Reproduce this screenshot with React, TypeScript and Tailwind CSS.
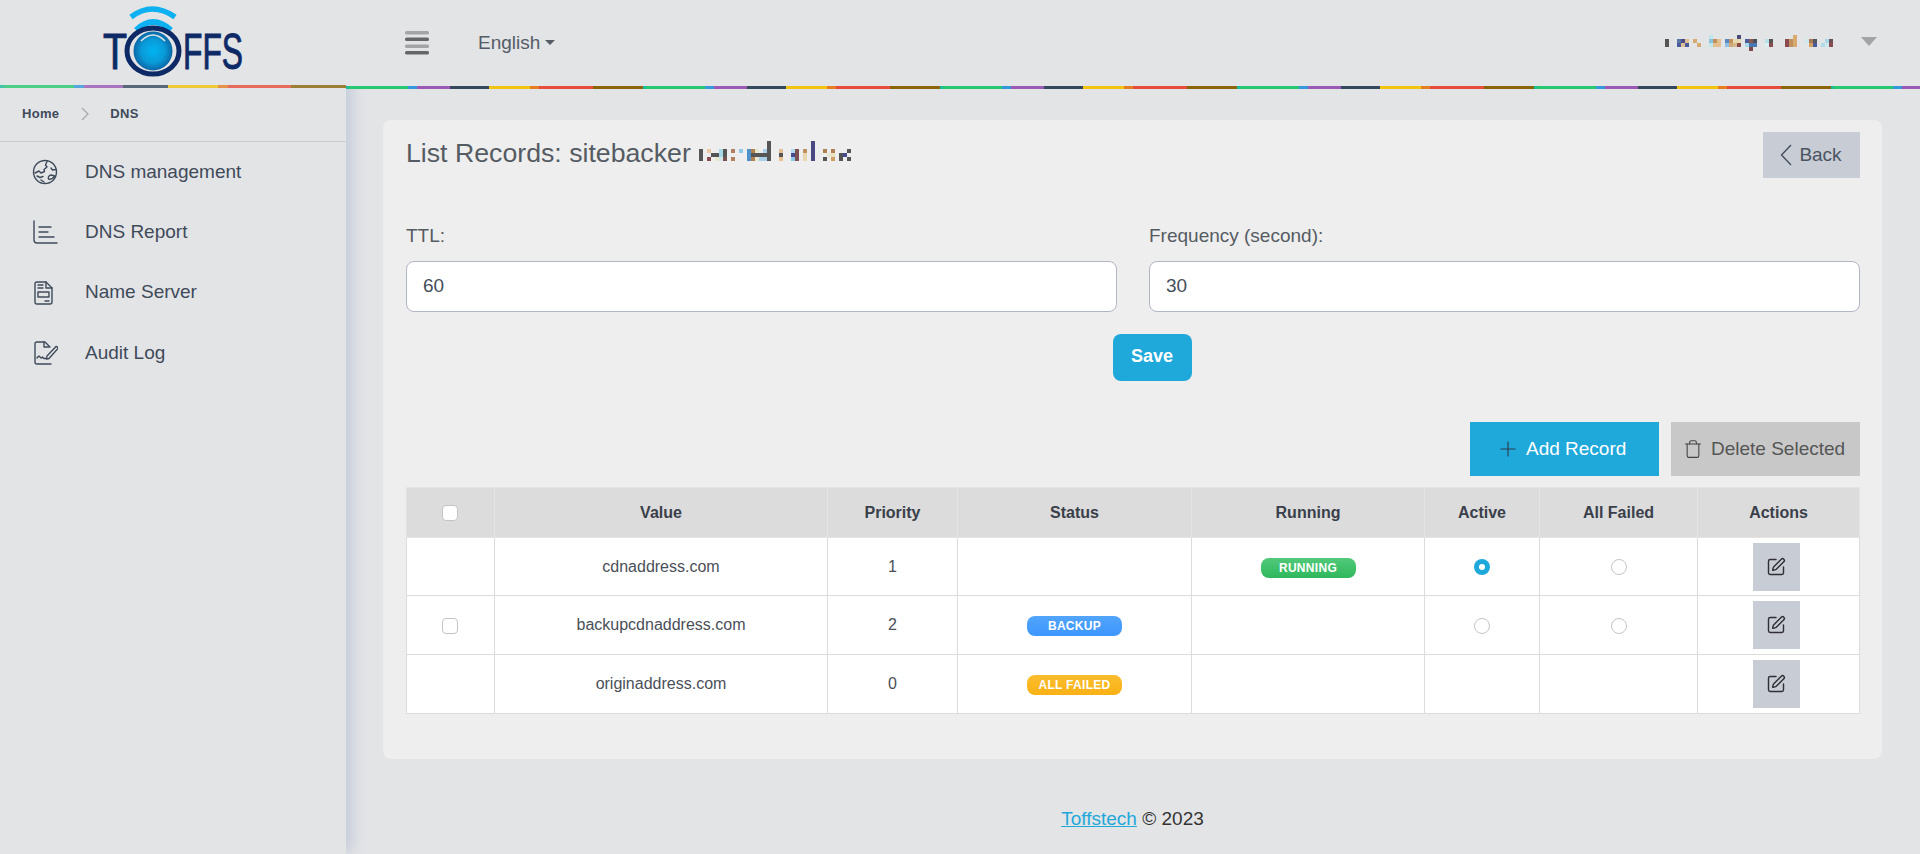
import { SquarePen, Plus, Trash } from "lucide-react";

type Cell = [number, number, string];

const nameCells: Cell[] = [
  [0,1,"#555"],[0,2,"#555"],
  [3,1,"#5b78a8"],[3,2,"#4a5a9a"],[4,1,"#4a4a8a"],[4,2,"#e0c090"],[5,1,"#e0c090"],[5,2,"#4a5a9a"],
  [7,1,"#d8aa70"],[8,2,"#d8aa70"],
  [11,0,"#bfe6ea"],[11,1,"#8cc4e0"],[11,2,"#bfe6ea"],[12,1,"#c09060"],[12,2,"#e4c090"],[13,1,"#e4c090"],[13,2,"#e4c090"],
  [15,1,"#5b8ac0"],[15,2,"#90c0e8"],[16,1,"#c09060"],[16,2,"#d0a878"],[17,1,"#e8d8b0"],[17,2,"#d8b888"],[18,0,"#4a4a7a"],[18,1,"#e8d8b0"],[18,2,"#8a4a4a"],
  [20,1,"#4a5a9a"],[20,2,"#a8d8e8"],[21,1,"#8a5a50"],[21,2,"#4a78b0"],[21,3,"#7a4a4a"],[22,1,"#4a5060"],[22,2,"#4a78b0"],
  [25,1,"#b8e0e8"],[25,2,"#d8eef0"],[26,1,"#555"],[26,2,"#8a4a50"],
  [30,1,"#8a4a50"],[30,2,"#8a4a50"],[31,1,"#c09060"],[31,2,"#c09060"],[32,0,"#d8aa70"],[32,1,"#d8aa70"],[32,2,"#d8aa70"],
  [35,1,"#cde8ec"],[36,1,"#a87858"],[36,2,"#d0a060"],[37,1,"#555860"],[37,2,"#4a5a9a"],
  [39,2,"#b0dce8"],[40,1,"#a8d8e8"],[40,2,"#cde8ec"],[41,1,"#6a5058"],[41,2,"#8a4a50"],
];

const titleCells: Cell[] = [
  [0,2,"#555"],[0,3,"#555"],[0,4,"#555"],
  [2,2,"#e8c8a0"],[2,4,"#8a4a50"],[3,3,"#555"],[4,3,"#555"],[4,4,"#e8e8d0"],[5,2,"#a8d8e8"],[5,3,"#a8d8e8"],[5,4,"#d0e8ec"],
  [6,2,"#555"],[6,3,"#555"],[6,4,"#7a5050"],[8,2,"#b08060"],[8,4,"#b08060"],[10,2,"#90c8e8"],
  [12,2,"#5090c8"],[12,3,"#5090c8"],[12,4,"#5090c8"],[13,2,"#b08050"],[13,3,"#555"],[13,4,"#b08050"],[14,2,"#e8e8d0"],[14,3,"#555"],[14,4,"#e8e8d0"],
  [15,3,"#555"],[15,4,"#a8d0e8"],[16,2,"#a8d0e8"],[16,3,"#555"],[16,4,"#a8d0e8"],
  [17,0,"#555"],[17,1,"#555"],[17,2,"#555"],[17,3,"#555"],[17,4,"#555"],
  [20,2,"#e0c090"],[20,3,"#555"],[20,4,"#e8c090"],
  [23,2,"#b0d8f0"],[23,3,"#4a4a90"],[23,4,"#90c8e8"],[24,2,"#7a5050"],[24,3,"#7a5050"],[24,4,"#7a5050"],
  [26,2,"#c09060"],[26,3,"#e8d8b0"],[26,4,"#e8d8b0"],
  [28,0,"#4a4a80"],[28,1,"#4a4a80"],[28,2,"#4a4a80"],[28,3,"#4a4a80"],[28,4,"#4a4a80"],
  [31,2,"#b08050"],[31,4,"#555"],[32,3,"#e8e8d0"],[33,2,"#b08050"],[33,3,"#e8e0c0"],[33,4,"#d0a060"],
  [35,3,"#555"],[35,4,"#555"],[36,3,"#4a4a90"],[37,2,"#555"],[37,4,"#555"],
];

function Mosaic({ cells, cols, rows, className }: { cells: Cell[]; cols: number; rows: number; className?: string }) {
  return (
    <svg width={cols * 4} height={rows * 4} viewBox={`0 0 ${cols * 4} ${rows * 4}`} className={className} shapeRendering="crispEdges">
      {cells.map(([c, r, f], i) => (
        <rect key={i} x={c * 4} y={r * 4} width={4} height={4} fill={f} />
      ))}
    </svg>
  );
}

function Logo() {
  return (
    <svg width="170" height="85" viewBox="90 0 170 85" className="block">
      <defs>
        <radialGradient id="ball" cx="50%" cy="50%" r="55%">
          <stop offset="0%" stopColor="#00b4f0" />
          <stop offset="55%" stopColor="#0a9ad8" />
          <stop offset="100%" stopColor="#0a5a9a" />
        </radialGradient>
      </defs>
      <text transform="translate(103 69) scale(0.787 1)" fontFamily="'Liberation Sans', sans-serif" fontSize="50" fill="#0e2a66" stroke="#0e2a66" strokeWidth="1">T</text>
      <text transform="translate(183 69) scale(0.635 1)" fontFamily="'Liberation Sans', sans-serif" fontSize="50" fill="#0e2a66" stroke="#0e2a66" strokeWidth="1">FFS</text>
      <path d="M131 17 Q152 1 175 17" fill="none" stroke="#0db1f2" strokeWidth="5.5" />
      <path d="M136 30 Q153 14 171 30" fill="none" stroke="#0db1f2" strokeWidth="5.5" />
      <ellipse cx="153" cy="51" rx="26" ry="23" fill="#e3e4e6" stroke="#0e2a66" strokeWidth="5" />
      <circle cx="153" cy="51" r="19.5" fill="url(#ball)" />
      <path d="M141 41 Q153 29 165 41" fill="none" stroke="#e3e4e6" strokeWidth="1.6" />
    </svg>
  );
}

function Hamburger() {
  return (
    <svg width="24" height="24" viewBox="0 0 24 24" className="block">
      <rect x="0" y="0" width="24" height="3.5" rx="1.5" fill="#a4a4a4" />
      <rect x="0" y="6.5" width="24" height="3.5" rx="1.5" fill="#666" />
      <rect x="0" y="13.5" width="24" height="3.5" rx="1.5" fill="#a4a4a4" />
      <rect x="0" y="20" width="24" height="3.5" rx="1.5" fill="#666" />
    </svg>
  );
}

const iconProps = { width: 26, height: 26, viewBox: "0 0 26 26", fill: "none", stroke: "#3f4a5a", strokeWidth: 1.4, strokeLinecap: "round" as const, strokeLinejoin: "round" as const };

function GlobeIcon() {
  return (
    <svg {...iconProps}>
      <circle cx="13" cy="13" r="11.5" />
      <path d="M15 2.5 L13.5 6 L15 8 L12 10.5 L12.5 12.5 L9 14 L7 12 L3 14" />
      <path d="M24 10.5 L20.5 11 L19 9 M23 17 L19 16 Q15.5 17 16.5 20 Q20 21 23 17 Z" />
      <path d="M5 17 L8 18.5 L11 17.5 M9 21 L12 23" />
    </svg>
  );
}
function ChartIcon() {
  return (
    <svg {...iconProps}>
      <path d="M2 2 V21 Q2 24 5 24 H25" />
      <path d="M7 8 H19 M7 13 H16 M7 18 H22" />
    </svg>
  );
}
function DocIcon() {
  return (
    <svg {...iconProps}>
      <path d="M5 2 H14 L20 8 V22 Q20 24 18 24 H5 Q3 24 3 22 V4 Q3 2 5 2 Z" />
      <path d="M14 2 V8 H20" />
      <path d="M6 5 H11 M6 8 H11" />
      <rect x="6" y="12" width="11" height="5" />
      <path d="M13 21 H17" />
    </svg>
  );
}
function AuditIcon() {
  return (
    <svg {...iconProps}>
      <path d="M19 24 H5 Q3 24 3 22 V4 Q3 2 5 2 H13 L18 7" />
      <path d="M12 2 V7 H17" />
      <path d="M5 18 Q7 15 8 17 T10.5 17 L12 18.5 H14" />
      <path d="M15 16 L24 6.5 Q26 6.5 26 8.5 L17 18.5 L14.5 19 Z" />
    </svg>
  );
}

const stripTop =
  "bg-[repeating-linear-gradient(90deg,#1abc9c_0,#1abc9c_3px,#27c970_3px,#27c970_62px,#3498db_62px,#3498db_71px,#9b59b6_71px,#9b59b6_104px,#34495e_104px,#34495e_143px,#f1c40f_143px,#f1c40f_184px,#e67e22_184px,#e67e22_193px,#e74c3c_193px,#e74c3c_247px,#8b6508_247px,#8b6508_297px)]";
const stripSide =
  "bg-[linear-gradient(90deg,#1abc9c_0,#1abc9c_4px,#27c970_4px,#27c970_74px,#3498db_74px,#3498db_84px,#9b59b6_84px,#9b59b6_123px,#34495e_123px,#34495e_168px,#f1c40f_168px,#f1c40f_218px,#e67e22_218px,#e67e22_228px,#e74c3c_228px,#e74c3c_291px,#8b6508_291px,#8b6508_346px)]";

const menu = [
  { label: "DNS management", icon: <GlobeIcon /> },
  { label: "DNS Report", icon: <ChartIcon /> },
  { label: "Name Server", icon: <DocIcon /> },
  { label: "Audit Log", icon: <AuditIcon /> },
];

function Radio({ checked }: { checked?: boolean }) {
  return checked ? (
    <span className="inline-flex w-4 h-4 rounded-full bg-[#1fa8da] items-center justify-center align-middle">
      <span className="w-1.5 h-1.5 rounded-full bg-white" />
    </span>
  ) : (
    <span className="inline-block w-4 h-4 rounded-full border border-[#c4c4c4] bg-white align-middle" />
  );
}

function Check() {
  return <span className="inline-block w-4 h-4 mr-[2px] rounded-[4px] border border-[#c4c4c4] bg-white align-middle" />;
}

function Badge({ text, className }: { text: string; className: string }) {
  return (
    <span className={`inline-flex w-[95px] h-5 rounded-lg items-center justify-center text-white text-[12px] font-bold tracking-[0.3px] ${className}`}>
      {text}
    </span>
  );
}

function EditBtn() {
  return (
    <span className="inline-flex w-[47px] h-12 mr-[5px] bg-[#c8ccd4] items-center justify-center align-middle">
      <SquarePen size={20} strokeWidth={1.7} color="#2f2f35" />
    </span>
  );
}

const th = "border border-[#e4e4e4] font-bold text-center p-0";
const td = "border border-[#dcdcdc] text-center p-0";

export default function App() {
  return (
    <div className="flex h-[854px] w-[1920px] overflow-hidden bg-[#e3e4e6] font-['Liberation_Sans',Arial,sans-serif] text-[#3f4a5a]">
      <aside className="relative z-10 w-[346px] shrink-0 flex flex-col bg-[#e3e4e6] shadow-[8px_0_14px_-2px_#c3cad9]">
        <div className="h-[85px] flex pl-[90px]">
          <Logo />
        </div>
        <div className={`h-[3px] opacity-80 ${stripSide}`} />
        <div className="h-[54px] flex items-center pl-[22px] pb-[2px] border-b border-[#ccced2] text-[13px] font-bold tracking-[0.3px]">
          <span>Home</span>
          <svg width="10" height="14" viewBox="0 0 10 14" className="ml-[21px] mr-[20px]" fill="none" stroke="#a8a8a8" strokeWidth="1.2">
            <path d="M2 1 L8 7 L2 13" />
          </svg>
          <span>DNS</span>
        </div>
        <nav className="flex flex-col">
          {menu.map((m) => (
            <div key={m.label} className="h-[60.3px] flex items-center pl-[32px] text-[19px]">
              <span className="w-[53px] shrink-0 flex">{m.icon}</span>
              <span>{m.label}</span>
            </div>
          ))}
        </nav>
      </aside>

      <div className="flex-1 flex flex-col min-w-0">
        <header className="relative z-20 h-[86px] bg-[#e3e4e6] flex items-center pl-[59px] pr-[43px]">
          <Hamburger />
          <span className="ml-[49px] text-[19px] text-[#555c66]">English</span>
          <span className="ml-[5px] mt-[-2px] w-0 h-0 border-x-[5px] border-x-transparent border-t-[5px] border-t-[#555c66]" />
          <Mosaic cells={nameCells} cols={42} rows={4} className="ml-auto mt-[-1px]" />
          <span className="ml-[28px] mt-[-3px] w-0 h-0 border-x-[8px] border-x-transparent border-t-[9px] border-t-[#a2a4a6]" />
        </header>
        <div className={`relative z-20 h-[3px] ${stripTop}`} />

        <main className="flex-1 flex flex-col pl-[37px] pr-[38px] pt-[31px]">
          <section className="h-[639px] rounded-lg bg-[#eeeeee] pl-[23px] pr-[22px] pt-[12px]">
            <div className="flex justify-between items-start">
              <div className="flex items-start mt-[4px]">
                <h2 className="w-[293px] whitespace-nowrap text-[26.7px] leading-[34px] font-normal text-[#555b62]">List Records: sitebacker</h2>
                <Mosaic cells={titleCells} cols={38} rows={5} className="mt-[5px]" />
              </div>
              <button className="w-[97px] h-[46px] bg-[#c8ccd4] flex items-center justify-center text-[19px] text-[#4a5462]">
                <svg width="12" height="22" viewBox="0 0 12 22" fill="none" stroke="#3f4a5a" strokeWidth="1.3" className="mr-[7px] ml-[-1px]">
                  <path d="M11 1 L1.5 11 L11 21" />
                </svg>
                Back
              </button>
            </div>

            <div className="grid grid-cols-[711px_711px] gap-x-[32px] mt-[45px]">
              <label className="block">
                <span className="block text-[19px] leading-[26px] text-[#555b62]">TTL:</span>
                <span className="mt-[12px] flex h-[51px] items-center rounded-lg border border-[#b2b5c4] bg-white px-4 text-[19px] text-[#444e5a]">60</span>
              </label>
              <label className="block">
                <span className="block text-[19px] leading-[26px] text-[#555b62]">Frequency (second):</span>
                <span className="mt-[12px] flex h-[51px] items-center rounded-lg border border-[#b2b5c4] bg-white px-4 text-[19px] text-[#444e5a]">30</span>
              </label>
            </div>

            <div className="flex justify-center mt-[22px] pl-[38px]">
              <button className="w-[79px] h-[47px] pb-[2px] rounded-lg bg-[#1fa8da] text-white text-[18px] font-bold">Save</button>
            </div>

            <div className="flex justify-end gap-3 mt-[41px]">
              <button className="w-[189px] h-[54px] bg-[#1fa8da] flex items-center pl-[26px] text-[19px] text-white">
                <Plus size={24} strokeWidth={1.1} color="#2a3a4a" className="mr-[6px]" />
                Add Record
              </button>
              <button className="w-[189px] h-[54px] bg-[#c8c8c8] flex items-center pl-[12px] text-[19px] text-[#555]">
                <Trash size={20} strokeWidth={1.3} color="#444" className="mr-[8px]" />
                Delete Selected
              </button>
            </div>

            <table className="mt-[11px] w-[1453px] table-fixed border-collapse text-[16px] text-[#4a4f58]">
              <colgroup>
                <col className="w-[88px]" />
                <col className="w-[333px]" />
                <col className="w-[130px]" />
                <col className="w-[234px]" />
                <col className="w-[233px]" />
                <col className="w-[115px]" />
                <col className="w-[158px]" />
                <col className="w-[162px]" />
              </colgroup>
              <thead>
                <tr className="h-[50px] bg-[#dcdcdc] text-[#3a3f4a]">
                  <th className={th}><Check /></th>
                  <th className={th}>Value</th>
                  <th className={th}>Priority</th>
                  <th className={th}>Status</th>
                  <th className={th}>Running</th>
                  <th className={th}>Active</th>
                  <th className={th}>All Failed</th>
                  <th className={th}>Actions</th>
                </tr>
              </thead>
              <tbody className="bg-white">
                <tr className="h-[58px]">
                  <td className={td}></td>
                  <td className={td}>cdnaddress.com</td>
                  <td className={td}>1</td>
                  <td className={td}></td>
                  <td className={td}><Badge text="RUNNING" className="bg-[linear-gradient(180deg,#52c97a,#2eb85c)]" /></td>
                  <td className={td}><Radio checked /></td>
                  <td className={td}><Radio /></td>
                  <td className={td}><EditBtn /></td>
                </tr>
                <tr className="h-[59px]">
                  <td className={td}><Check /></td>
                  <td className={td}>backupcdnaddress.com</td>
                  <td className={td}>2</td>
                  <td className={td}><Badge text="BACKUP" className="bg-[linear-gradient(180deg,#52a5fa,#3d96ff)]" /></td>
                  <td className={td}></td>
                  <td className={td}><Radio /></td>
                  <td className={td}><Radio /></td>
                  <td className={td}><EditBtn /></td>
                </tr>
                <tr className="h-[59px]">
                  <td className={td}></td>
                  <td className={td}>originaddress.com</td>
                  <td className={td}>0</td>
                  <td className={td}><Badge text="ALL FAILED" className="bg-[linear-gradient(180deg,#fbbd2e,#f9b115)]" /></td>
                  <td className={td}></td>
                  <td className={td}></td>
                  <td className={td}></td>
                  <td className={td}><EditBtn /></td>
                </tr>
              </tbody>
            </table>
          </section>

          <footer className="mt-[48px] text-center text-[19px] leading-[24px] text-[#333]">
            <span className="text-[#1fa8da] underline">Toffstech</span> © 2023
          </footer>
        </main>
      </div>
    </div>
  );
}
